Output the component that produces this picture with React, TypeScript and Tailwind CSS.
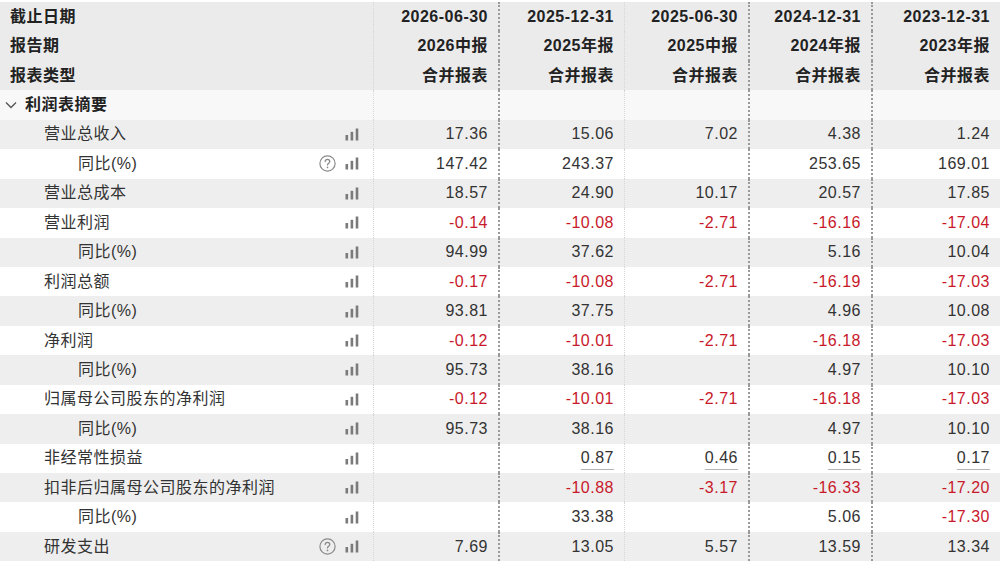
import type { ReactNode } from 'react';

type Row = {
  label: string;
  level: 1 | 2;
  help?: boolean;
  values: string[];
  underline?: boolean;
};

const periods = [
  { date: '2026-06-30', name: '2026中报' },
  { date: '2025-12-31', name: '2025年报' },
  { date: '2025-06-30', name: '2025中报' },
  { date: '2024-12-31', name: '2024年报' },
  { date: '2023-12-31', name: '2023年报' },
];

const rows: Row[] = [
  { label: '营业总收入', level: 1, values: ['17.36', '15.06', '7.02', '4.38', '1.24'] },
  { label: '同比(%)', level: 2, help: true, values: ['147.42', '243.37', '', '253.65', '169.01'] },
  { label: '营业总成本', level: 1, values: ['18.57', '24.90', '10.17', '20.57', '17.85'] },
  { label: '营业利润', level: 1, values: ['-0.14', '-10.08', '-2.71', '-16.16', '-17.04'] },
  { label: '同比(%)', level: 2, values: ['94.99', '37.62', '', '5.16', '10.04'] },
  { label: '利润总额', level: 1, values: ['-0.17', '-10.08', '-2.71', '-16.19', '-17.03'] },
  { label: '同比(%)', level: 2, values: ['93.81', '37.75', '', '4.96', '10.08'] },
  { label: '净利润', level: 1, values: ['-0.12', '-10.01', '-2.71', '-16.18', '-17.03'] },
  { label: '同比(%)', level: 2, values: ['95.73', '38.16', '', '4.97', '10.10'] },
  { label: '归属母公司股东的净利润', level: 1, values: ['-0.12', '-10.01', '-2.71', '-16.18', '-17.03'] },
  { label: '同比(%)', level: 2, values: ['95.73', '38.16', '', '4.97', '10.10'] },
  { label: '非经常性损益', level: 1, underline: true, values: ['', '0.87', '0.46', '0.15', '0.17'] },
  { label: '扣非后归属母公司股东的净利润', level: 1, values: ['', '-10.88', '-3.17', '-16.33', '-17.20'] },
  { label: '同比(%)', level: 2, values: ['', '33.38', '', '5.06', '-17.30'] },
  { label: '研发支出', level: 1, help: true, values: ['7.69', '13.05', '5.57', '13.59', '13.34'] },
];

// column widths + separator style, left to right
const cols = [
  'w-[126px] border-r-2 border-dotted border-[#9a9a9a]',
  'w-[125px] border-r border-dotted border-[#d6d6d6]',
  'w-[125px] border-r-2 border-dotted border-[#9a9a9a]',
  'w-[123px] border-r-2 border-dotted border-[#9a9a9a]',
  'flex-1',
];

function BarsIcon() {
  return (
    <svg width="15" height="13" viewBox="0 0 15 13" className="shrink-0">
      <rect x="0.5" y="7" width="2.6" height="5.5" fill="#7a7a7a" />
      <rect x="5.6" y="3.8" width="2.6" height="8.7" fill="#7a7a7a" />
      <rect x="10.7" y="0.5" width="2.6" height="12" fill="#7a7a7a" />
    </svg>
  );
}

function HelpIcon() {
  return (
    <svg width="17" height="17" viewBox="0 0 17 17" className="shrink-0">
      <circle cx="8.5" cy="8.5" r="7.6" fill="none" stroke="#8a8a8a" strokeWidth="1.2" />
      <path
        d="M6.2 6.6a2.3 2.3 0 0 1 4.6 0c0 1.5-2.3 1.7-2.3 3.3"
        fill="none"
        stroke="#8a8a8a"
        strokeWidth="1.3"
        strokeLinecap="round"
      />
      <circle cx="8.5" cy="12.4" r="0.85" fill="#8a8a8a" />
    </svg>
  );
}

function Chevron() {
  return (
    <svg width="12" height="8" viewBox="0 0 12 8" className="shrink-0">
      <polyline points="1,1.5 6,6.5 11,1.5" fill="none" stroke="#555" strokeWidth="1.3" />
    </svg>
  );
}

function Line({ bg, left, cells }: { bg: string; left: ReactNode; cells: ReactNode[] }) {
  return (
    <div className={`flex h-[29.45px] ${bg}`}>
      <div className="flex w-[374px] shrink-0 items-center border-r border-dotted border-[#d6d6d6] pr-[13px]">
        {left}
      </div>
      {cols.map((c, i) => (
        <div key={i} className={`flex shrink-0 items-center justify-end pr-[10px] ${c}`}>
          {cells[i]}
        </div>
      ))}
    </div>
  );
}

function Value({ v, underline }: { v: string; underline?: boolean }) {
  if (!v) return null;
  const red = v.startsWith('-');
  return (
    <span
      className={`${red ? 'text-[#c8192b]' : 'text-[#333]'} ${
        underline ? 'underline decoration-[#b5b5b5] underline-offset-[6px]' : ''
      }`}
    >
      {v}
    </span>
  );
}

export default function App() {
  return (
    <div
      className="h-[561px] w-[1000px] overflow-hidden bg-white pt-[2px] text-[16px] leading-none tracking-[0.5px] text-[#333]"
      style={{ fontFamily: '"Liberation Sans", "Noto Sans CJK SC", sans-serif' }}
    >
      {/* Header */}
      <div className="font-bold text-[#222]">
        <Line
          bg="bg-[#ebebeb]"
          left={<span className="pl-[10px]">截止日期</span>}
          cells={periods.map((p) => p.date)}
        />
        <Line
          bg="bg-[#ebebeb]"
          left={<span className="pl-[10px]">报告期</span>}
          cells={periods.map((p) => p.name)}
        />
        <Line
          bg="bg-[#ebebeb]"
          left={<span className="pl-[10px]">报表类型</span>}
          cells={periods.map(() => '合并报表')}
        />
      </div>

      {/* Section */}
      <Line
        bg="bg-[#f8f8f8]"
        left={
          <div className="flex items-center gap-[8px] pl-[5px] font-bold text-[#222]">
            <Chevron />
            <span>利润表摘要</span>
          </div>
        }
        cells={[]}
      />

      {rows.map((r, i) => (
        <Line
          key={i}
          bg={i % 2 === 0 ? 'bg-[#eeeeee]' : 'bg-white'}
          left={
            <>
              <span className={r.level === 1 ? 'pl-[44px]' : 'pl-[78px]'}>{r.label}</span>
              <div className="ml-auto flex items-center gap-[9px]">
                {r.help && <HelpIcon />}
                <BarsIcon />
              </div>
            </>
          }
          cells={r.values.map((v, j) => (
            <Value key={j} v={v} underline={r.underline} />
          ))}
        />
      ))}
    </div>
  );
}
